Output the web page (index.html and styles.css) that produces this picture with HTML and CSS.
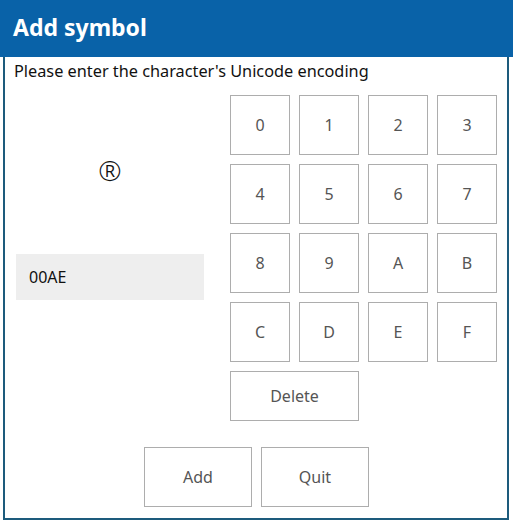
FILE: index.html
```html
<!DOCTYPE html>
<html lang="en">
<head>
    <meta charset="UTF-8">
    <meta name="viewport" content="width=device-width, initial-scale=1.0">
    <title>Add symbol</title>
    <link rel="stylesheet" href="styles.css">
</head>
<body>
    <div class="title-bar">
        <h1>Add symbol</h1>
    </div>
    <div class="dialog">
        <p class="prompt">Please enter the character's Unicode encoding</p>

        <div class="main">
            <div class="preview">
                <div class="symbol">®</div>
                <div class="code-input">00AE</div>
            </div>

            <div class="keypad">
                <button class="key">0</button>
                <button class="key">1</button>
                <button class="key">2</button>
                <button class="key">3</button>
                <button class="key">4</button>
                <button class="key">5</button>
                <button class="key">6</button>
                <button class="key">7</button>
                <button class="key">8</button>
                <button class="key">9</button>
                <button class="key">A</button>
                <button class="key">B</button>
                <button class="key">C</button>
                <button class="key">D</button>
                <button class="key">E</button>
                <button class="key">F</button>
                <button class="key delete">Delete</button>
            </div>
        </div>

        <div class="actions">
            <button class="action">Add</button>
            <button class="action">Quit</button>
        </div>
    </div>
</body>
</html>
```

FILE: styles.css
```css
body {
    margin: 0;
    font-family: "Noto Sans", "Open Sans", sans-serif;
    background-color: #fff;
    color: #111;
}
.title-bar {
    height: 57px;
    background-color: #0962a8; /* header blue */
}
.title-bar h1 {
    margin: 0;
    padding-left: 13px;
    font-size: 23px;
    line-height: 54px;
    font-weight: bold;
    color: #fff;
}
.dialog {
    margin-left: 3px;
    width: 481px;
    padding: 3px 10px 11px 11px;
    border: 2px solid #1d5b7c;
    border-top: none;
}
.prompt {
    margin: 0 0 0 -2px;
    font-size: 16.3px;
    line-height: 22px;
}
.main {
    display: flex;
    gap: 26px;
    margin-top: 13px;
}
.preview {
    width: 188px;
}
.symbol {
    margin-top: 58px;
    font-size: 28px;
    line-height: 34px;
    font-weight: 300;
    text-align: center;
}
.code-input {
    margin-top: 67px;
    height: 46px;
    padding-left: 13px;
    background-color: #eeeeee;
    font-size: 16px;
    line-height: 46px;
}
.keypad {
    display: grid;
    grid-template-columns: repeat(4, 60px);
    grid-template-rows: repeat(4, 60px) 50px;
    gap: 9px;
}
button {
    margin: 0;
    padding: 0;
    font-family: inherit;
    font-size: 16px;
    color: #555;
    background-color: #fff;
    border: 1px solid #adadad;
    cursor: pointer;
}
.delete {
    grid-column: span 2;
}
.actions {
    display: flex;
    justify-content: center;
    gap: 9px;
    margin-top: 26px;
}
.action {
    width: 108px;
    height: 60px;
}
```
